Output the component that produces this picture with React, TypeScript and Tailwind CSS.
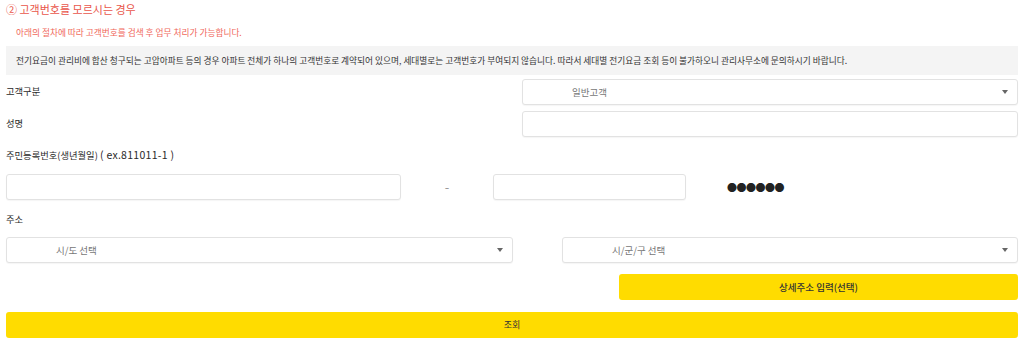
import React from "react";

const font = { fontFamily: '"Noto Sans CJK KR", "Noto Sans", sans-serif' };

function Arrow() {
  return (
    <svg className="absolute right-[9px] top-1/2 -translate-y-1/2" width="6" height="4" viewBox="0 0 6 4">
      <path d="M0 0 L6 0 L3 4 Z" fill="#666" />
    </svg>
  );
}

function SelectBox({ label, className }: { label: string; className: string }) {
  return (
    <div
      className={`relative h-[26px] bg-white border border-[#e2e2e2] rounded-[3px] shadow-[0_1px_1px_rgba(0,0,0,0.04)] flex items-center ${className}`}
    >
      <span className="pl-[49px] text-[9.5px] text-[#777]">{label}</span>
      <Arrow />
    </div>
  );
}

function InputBox({ className }: { className: string }) {
  return (
    <div
      className={`h-[26px] bg-white border border-[#e2e2e2] rounded-[3px] shadow-[0_1px_1px_rgba(0,0,0,0.04)] ${className}`}
    />
  );
}

export default function App() {
  return (
    <div className="w-[1024px] h-[344px] bg-white px-[6px] overflow-hidden" style={font}>
      <div className="h-[18px] leading-[18px] text-[11px] text-[#e9564b]">② 고객번호를 모르시는 경우</div>

      <div className="mt-[7px] h-[16px] leading-[16px] pl-[10px] text-[8.7px] text-[#f0675a]">
        아래의 절차에 따라 고객번호를 검색 후 업무 처리가 가능합니다.
      </div>

      <div className="mt-[5px] h-[29px] bg-[#f4f4f4] pl-[10px] flex items-center text-[8.7px] text-[#333] whitespace-nowrap">
        전기요금이 관리비에 합산 청구되는 고압아파트 등의 경우 아파트 전체가 하나의 고객번호로 계약되어 있으며, 세대별로는 고객번호가 부여되지 않습니다. 따라서 세대별 전기요금 조회 등이 불가하오니 관리사무소에 문의하시기 바랍니다.
      </div>

      <div className="mt-[4px] flex items-center justify-between">
        <span className="text-[9.3px] text-[#2a2a2a]">고객구분</span>
        <SelectBox label="일반고객" className="w-[496px]" />
      </div>

      <div className="mt-[6px] flex items-center justify-between">
        <span className="text-[9.3px] text-[#2a2a2a]">성명</span>
        <InputBox className="w-[496px]" />
      </div>

      <div className="mt-[9px] h-[18px] leading-[18px] text-[9.3px] text-[#2a2a2a]">
        주민등록번호(생년월일) <span className="text-[10.5px] tracking-[0.3px]">( ex.811011-1 )</span>
      </div>

      <div className="mt-[10px] flex items-center">
        <InputBox className="w-[395px]" />
        <span className="w-[92px] text-center text-[13px] text-[#999]">-</span>
        <InputBox className="w-[193px]" />
        <span className="ml-[41px] text-[10px] tracking-[-0.5px] text-[#222]">●●●●●●</span>
      </div>

      <div className="mt-[10px] h-[18px] leading-[18px] text-[9.3px] text-[#2a2a2a]">주소</div>

      <div className="mt-[9px] flex items-center justify-between">
        <SelectBox label="시/도 선택" className="w-[507px]" />
        <SelectBox label="시/군/구 선택" className="w-[456px]" />
      </div>

      <div className="mt-[11px] flex justify-end">
        <button className="w-[399px] h-[26px] bg-[#ffdc00] rounded-[3px] text-[9.5px] font-medium text-[#333]">
          상세주소 입력(선택)
        </button>
      </div>

      <button className="mt-[12px] w-full h-[26px] bg-[#ffdc00] rounded-[3px] text-[9px] text-[#333] block">
        조회
      </button>
    </div>
  );
}
